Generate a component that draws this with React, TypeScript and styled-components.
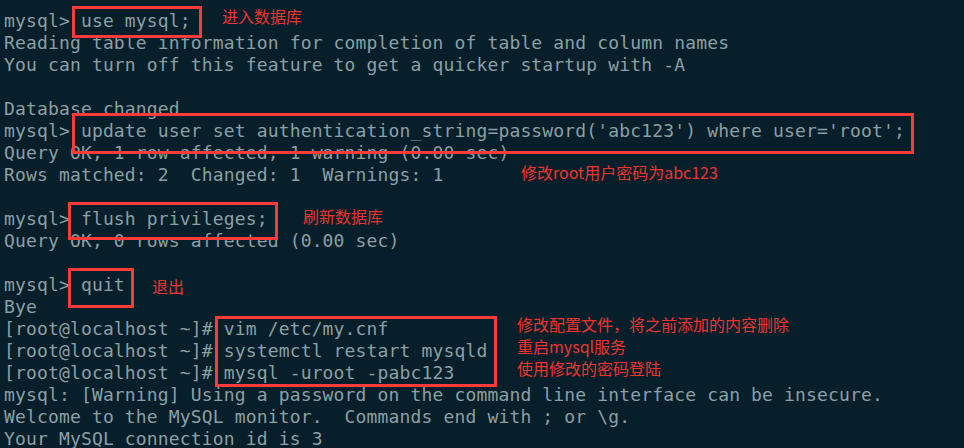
import React from "react";
import styled, { createGlobalStyle } from "styled-components";

const Global = createGlobalStyle`
  html, body { margin: 0; padding: 0; background: #061f2a; }
  #root { width: 964px; height: 448px; overflow: hidden; }
`;

const Terminal = styled.div`
  position: relative;
  width: 964px;
  height: 448px;
  background: #061f2a;
  overflow: hidden;
  box-sizing: border-box;
  padding: 10px 0 0 4px;
`;

const Lines = styled.pre`
  margin: 0;
  font-family: "DejaVu Sans Mono", "Liberation Mono", monospace;
  font-size: 18px;
  letter-spacing: 0.15px;
  line-height: 22px;
  color: #8c9fa5;
  white-space: pre;
`;

const Box = styled.div<{ $x: number; $y: number; $w: number; $h: number }>`
  position: absolute;
  left: ${(p) => p.$x}px;
  top: ${(p) => p.$y}px;
  width: ${(p) => p.$w}px;
  height: ${(p) => p.$h}px;
  border: 3px solid #fb3a3a;
  box-sizing: border-box;
`;

const Note = styled.div<{ $x: number; $y: number }>`
  position: absolute;
  left: ${(p) => p.$x}px;
  top: ${(p) => p.$y}px;
  font-family: "Noto Sans CJK SC", "Noto Sans", sans-serif;
  font-size: 16px;
  line-height: 22px;
  color: #ee3430;
  white-space: pre;
`;

const text = `mysql> use mysql;
Reading table information for completion of table and column names
You can turn off this feature to get a quicker startup with -A

Database changed
mysql> update user set authentication_string=password('abc123') where user='root';
Query OK, 1 row affected, 1 warning (0.00 sec)
Rows matched: 2  Changed: 1  Warnings: 1

mysql> flush privileges;
Query OK, 0 rows affected (0.00 sec)

mysql> quit
Bye
[root@localhost ~]# vim /etc/my.cnf
[root@localhost ~]# systemctl restart mysqld
[root@localhost ~]# mysql -uroot -pabc123
mysql: [Warning] Using a password on the command line interface can be insecure.
Welcome to the MySQL monitor.  Commands end with ; or \\g.
Your MySQL connection id is 3`;

const boxes = [
  { x: 72, y: 6, w: 130, h: 32 },
  { x: 72, y: 113, w: 842, h: 41 },
  { x: 68, y: 202, w: 210, h: 38 },
  { x: 68, y: 268, w: 66, h: 40 },
  { x: 215, y: 316, w: 282, h: 71 },
];

const notes = [
  { x: 222, y: 5, t: "进入数据库" },
  { x: 521, y: 161, t: "修改root用户密码为abc123" },
  { x: 303, y: 205, t: "刷新数据库" },
  { x: 152, y: 275, t: "退出" },
  { x: 517, y: 313, t: "修改配置文件，将之前添加的内容删除" },
  { x: 517, y: 335, t: "重启mysql服务" },
  { x: 517, y: 357, t: "使用修改的密码登陆" },
];

export default function App() {
  return (
    <>
      <Global />
      <Terminal>
        <Lines>{text}</Lines>
        {boxes.map((b, i) => (
          <Box key={i} $x={b.x} $y={b.y} $w={b.w} $h={b.h} />
        ))}
        {notes.map((n, i) => (
          <Note key={i} $x={n.x} $y={n.y}>
            {n.t}
          </Note>
        ))}
      </Terminal>
    </>
  );
}
